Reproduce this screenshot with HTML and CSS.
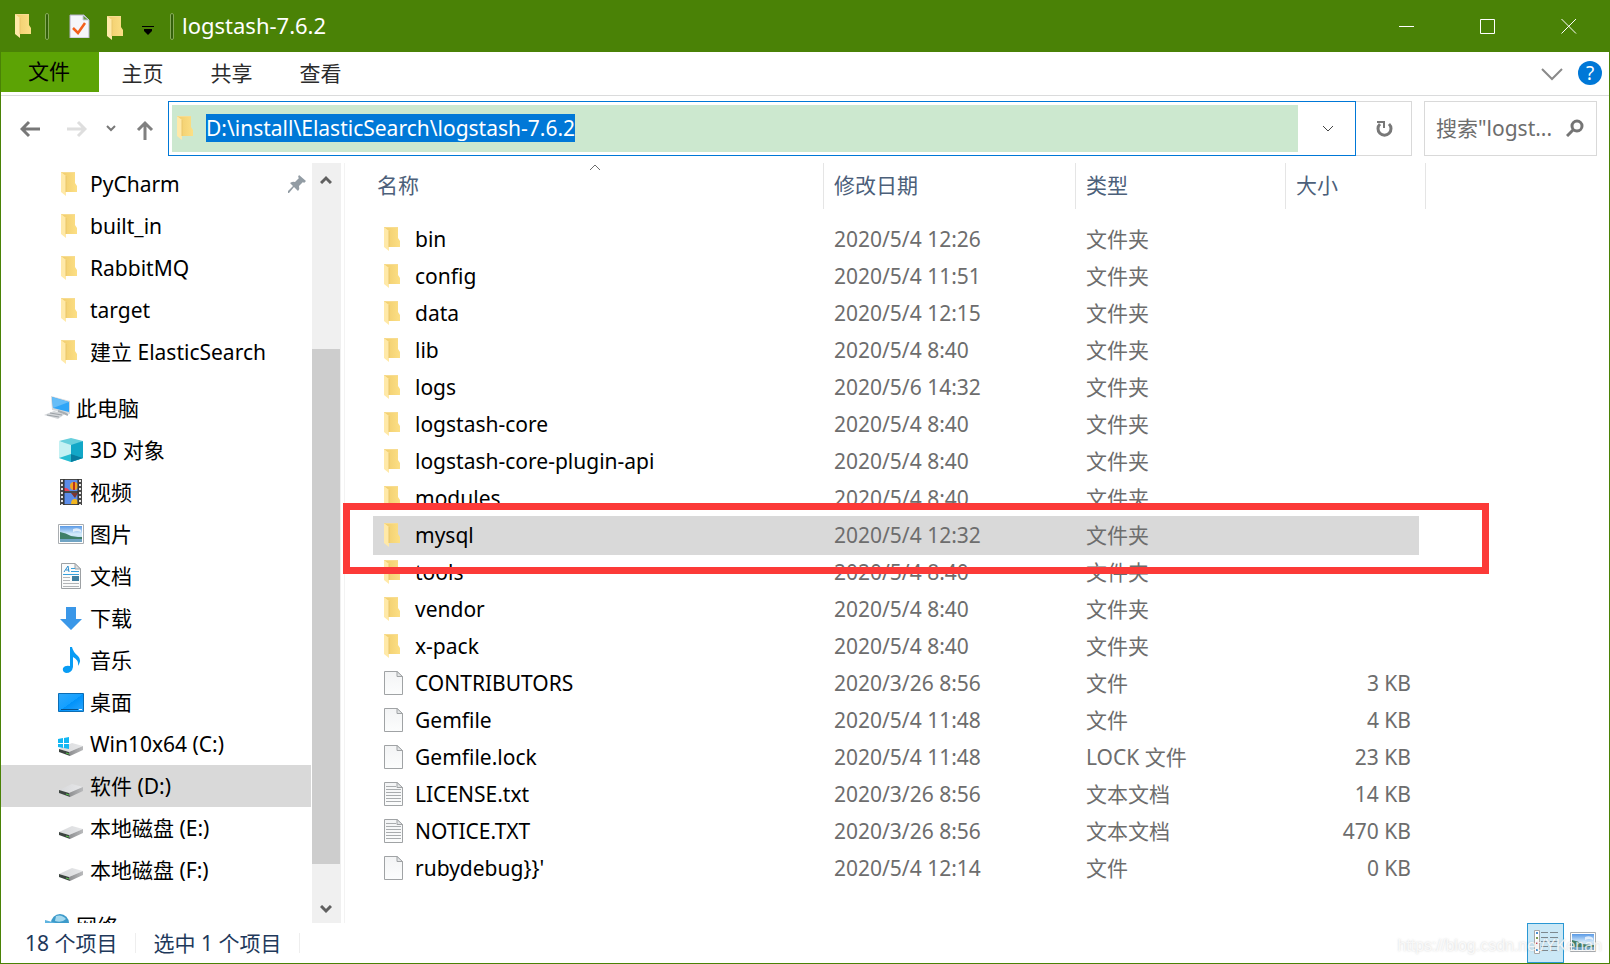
FILE: index.html
```html
<!DOCTYPE html>
<html lang="zh-CN">
<head>
<meta charset="utf-8">
<title>logstash-7.6.2</title>
<link rel="stylesheet" href="styles.css">
</head>
<body>
<svg class="defs" aria-hidden="true">
  <defs>
    <linearGradient id="g-folder" x1="0" x2="1"><stop offset="0" stop-color="#f0cc6c"/><stop offset="1" stop-color="#fcdf85"/></linearGradient>
    <linearGradient id="g-page" x1="0" x2="0" y1="0" y2="1"><stop offset="0" stop-color="#f3f4f5"/><stop offset="1" stop-color="#fcfdfd"/></linearGradient>
    <linearGradient id="g-sky" x1="0" x2="0" y1="0" y2="1"><stop offset="0" stop-color="#5a9ae6"/><stop offset=".5" stop-color="#d5ebfb"/><stop offset="1" stop-color="#a9cfee"/></linearGradient>
    <linearGradient id="g-blue" x1="0" x2="1" y1="0" y2="1"><stop offset="0" stop-color="#2fa8fb"/><stop offset=".5" stop-color="#14a0ff"/><stop offset=".51" stop-color="#0092fa"/><stop offset="1" stop-color="#2ba5fd"/></linearGradient>
    <linearGradient id="g-drive" x1="0" x2="1"><stop offset="0" stop-color="#d8d9db"/><stop offset="1" stop-color="#e6e7e9"/></linearGradient>
    <linearGradient id="g-side" x1="0" x2="1"><stop offset="0" stop-color="#8d8e90"/><stop offset="1" stop-color="#b9babc"/></linearGradient>
  </defs>
  <symbol id="folder" viewBox="0 0 24 24">
    <path d="M1 0H15V11L17 14V20H4Z" fill="url(#g-folder)"/>
    <path d="M1 0L6 4V24L1 20Z" fill="#ffe9a8"/>
    <path d="M1 0H15V1H3Z" fill="#f7dc91"/>
    <path d="M6 4V20" stroke="#e9c66a" stroke-width="1"/>
  </symbol>
  <symbol id="page" viewBox="0 0 24 24">
    <path d="M1.500 .5H14L19.500 5.500V23.500H1.500Z" fill="url(#g-page)" stroke="#a0a3a5"/>
    <path d="M14 .5V5.500H19.500Z" fill="#e3e5e6" stroke="#a0a3a5"/>
  </symbol>
  <symbol id="textpage" viewBox="0 0 24 24">
    <use href="#page"/>
    <path d="M3 4.500H13M3 7.500H18M3 10.500H18M3 13.500H18M3 16.500H18M3 19.500H18" stroke="#a9acae"/>
  </symbol>
  <symbol id="drive" viewBox="0 0 26 26">
    <path d="M1 17L14 11L25 14L11 20Z" fill="url(#g-drive)"/>
    <path d="M11 20L25 14V18L12 24Z" fill="url(#g-side)"/>
    <path d="M1 17L11 20L12 24L1 20Z" fill="#3c4440"/>
    <path d="M8 21L11 22" stroke="#54c04a"/>
  </symbol>
  <symbol id="photo" viewBox="0 0 26 26">
    <path d="M.5 3.500H25.500V22.500H.5Z" fill="#fff" stroke="#a9adb1"/>
    <path d="M2 5H24V21H2Z" fill="url(#g-sky)"/>
    <path d="M2 11Q8 12 13 15L20 16L24 16V18H2Z" fill="#3f7f68"/>
    <path d="M2 18H24V21H2Z" fill="#70a4c4"/>
    <path d="M15 8Q20 6 23 9V11Q19 9 15 11Z" fill="#fff" opacity=".7"/>
  </symbol>
</svg>

<div class="window">
  <header class="titlebar">
    <svg class="ico"><use href="#folder"/></svg>
    <span class="sep sep-first"></span>
    <button class="quick" aria-label="属性"><svg class="ico" viewBox="0 0 24 24"><path d="M2 1H16L21 6V24H2Z" fill="#f6f6fa" stroke="#b4b0c8"/><path d="M15 1V6H21Z" fill="#6d9a45" stroke="#c8cbe0"/><path d="M5 14L10 19L17 9" fill="none" stroke="#f4601c" stroke-width="2.500"/></svg></button>
    <button class="quick quick-folder" aria-label="新建文件夹"><svg class="ico"><use href="#folder"/></svg></button>
    <button class="quick quick-more" aria-label="自定义快速访问工具栏"><svg width="12" height="10" viewBox="0 0 12 10"><path d="M0 1H12V2H0ZM2 4H10V6L6 10L2 6Z"/></svg></button>
    <span class="sep"></span>
    <h1>logstash-7.6.2</h1>
    <div class="caption">
      <button aria-label="最小化"><svg width="16" height="16"><path d="M0 8.500H15"/></svg></button>
      <button aria-label="最大化"><svg width="16" height="16"><path d="M.5 1.500H14.500V15.500H.5Z"/></svg></button>
      <button aria-label="关闭"><svg width="16" height="16"><path d="M.5 1L15 15.500M15 1L.5 15.500"/></svg></button>
    </div>
  </header>

  <nav class="ribbon">
    <button class="tab tab-file">文件</button>
    <button class="tab">主页</button>
    <button class="tab">共享</button>
    <button class="tab">查看</button>
    <button class="expand" aria-label="展开功能区"><svg width="22" height="14"><path d="M1 2L11 12L21 2"/></svg></button>
    <button class="help" aria-label="帮助">?</button>
  </nav>

  <div class="navbar">
    <div class="arrows">
      <button aria-label="后退"><svg width="20" height="18" viewBox="0 0 20 18"><path d="M20 9H2M9 2L2 9L9 16" stroke="#787878" stroke-width="3"/></svg></button>
      <button class="fwd" aria-label="前进"><svg width="20" height="18" viewBox="0 0 20 18"><path d="M0 9H18M11 2L18 9L11 16" stroke="#dedede" stroke-width="3"/></svg></button>
      <button class="recent" aria-label="最近浏览的位置"><svg width="10" height="8" viewBox="0 0 10 8"><path d="M1 1L5 5L9 1" stroke="#787878" stroke-width="2"/></svg></button>
      <button class="up" aria-label="向上"><svg width="18" height="20" viewBox="0 0 18 20"><path d="M9 20V3M2 10L9 3L16 10" stroke="#808080" stroke-width="3"/></svg></button>
    </div>
    <div class="address">
      <div class="path">
        <svg class="ico"><use href="#folder"/></svg>
        <input class="path-input" aria-label="地址" value="D:\install\ElasticSearch\logstash-7.6.2" spellcheck="false">
      </div>
      <button class="drop" aria-label="以前的位置"><svg width="12" height="8"><path d="M1 1L6 6L11 1"/></svg></button>
    </div>
    <button class="refresh" aria-label="刷新"><svg width="18" height="18" viewBox="0 0 18 18"><path d="M13 4A6.500 6.500 0 1 1 4 4" fill="none" stroke="#787878" stroke-width="3"/><path d="M1 2H8V8" fill="none" stroke="#787878" stroke-width="2"/></svg></button>
    <div class="search">
      <input aria-label="搜索" placeholder="搜索&quot;logst...">
      <button aria-label="开始搜索"><svg width="18" height="18" viewBox="0 0 18 18"><circle cx="11" cy="7" r="5" fill="none" stroke="#757575" stroke-width="3"/><path d="M1 17L8 10" stroke="#757575" stroke-width="3"/></svg></button>
    </div>
  </div>

  <div class="body">
    <aside class="sidebar">
      <ul class="tree">
        <li><a href="#"><svg class="ico"><use href="#folder"/></svg>PyCharm<svg class="pin" width="18" height="18" viewBox="0 0 18 18"><path d="M11 0L18 6L16 8L15 7L11 11Q12 14 10 16L6 12L1 18H0V16L5 11L2 8Q5 6 7 7L11 3L10 2Z" fill="#929ca4"/></svg></a></li>
        <li><a href="#"><svg class="ico"><use href="#folder"/></svg>built_in</a></li>
        <li><a href="#"><svg class="ico"><use href="#folder"/></svg>RabbitMQ</a></li>
        <li><a href="#"><svg class="ico"><use href="#folder"/></svg>target</a></li>
        <li><a href="#"><svg class="ico"><use href="#folder"/></svg>建立 ElasticSearch</a></li>
      </ul>
      <ul class="tree">
        <li class="root"><a href="#"><svg class="big" viewBox="0 0 26 26"><path d="M7 1L26 6V19L8 15Z" fill="#d4d8dc"/><path d="M8 2L25 7V17L9 13Z" fill="#2fa5f7"/><path d="M8 2L25 7L9 13Z" fill="#66bdf7"/><path d="M0 20L10 16L21 19L14 24Z" fill="#d3d6d9"/><path d="M3 20L15 22M6 18L18 20" stroke="#9ba1a6"/><path d="M14 16L20 18L24 20" stroke="#a7adb2" stroke-width="2"/></svg>此电脑</a></li>
        <li><a href="#"><svg class="big" viewBox="0 0 26 26"><path d="M1 4L13 1L25 4L13 10Z" fill="#67cfdc"/><path d="M1 4L13 8V25L1 21Z" fill="#c4f1f3"/><path d="M13 8L25 4V21L13 25Z" fill="#12a7c7"/><path d="M13 17L25 21L13 25L1 21Z" fill="#28bdd2"/><path d="M13 17L25 21L13 25Z" fill="#087c9f"/></svg>3D 对象</a></li>
        <li><a href="#"><svg class="big" viewBox="0 0 26 26"><path d="M2 0H24V26H2Z" fill="#484848"/><path d="M6 1H20V12H6ZM6 14H20V25H6Z" fill="#5c8de8"/><path d="M4 1V26M22 1V26" stroke="#e4e4e4" stroke-width="2" stroke-dasharray="2 2"/><circle cx="16" cy="7" r="4" fill="#f1a421"/><path d="M15 3H17V11H15Z" fill="#b9321d"/><path d="M6 9Q9 8 12 12H6Z" fill="#e9435a"/><path d="M13 25Q13 20 17 20Q20 20 20 25Z" fill="#f1b621"/><path d="M13 14H20L17 19Z" fill="#7d3630"/><path d="M20 0V26M6 0V26" stroke="#292929"/></svg>视频</a></li>
        <li><a href="#"><svg class="big"><use href="#photo"/></svg>图片</a></li>
        <li><a href="#"><svg class="big" viewBox="0 0 26 26"><path d="M3.500 .5H17L22.500 6V25.500H3.500Z" fill="#fafbfb" stroke="#9da1a4"/><path d="M17 .5V6H22.500Z" fill="#dee1e3" stroke="#9da1a4"/><path d="M6 9L10 3L11 9M8 7H11" fill="none" stroke="#2c8dcc" stroke-width="1"/><path d="M13 5.500H17M13 8.500H21M5 11.500H21" stroke="#37a0dc"/><path d="M5 14.500H12M5 17.500H12M5 20.500H21M5 23.500H21" stroke="#b2b5b8"/><path d="M14 13H21V18H14Z" fill="#3e7e9f"/></svg>文档</a></li>
        <li><a href="#"><svg class="big" viewBox="0 0 26 26"><path d="M8 2H18V14H24L13 25L2 14H8Z" fill="#3a97e8"/></svg>下载</a></li>
        <li><a href="#"><svg class="big" viewBox="0 0 26 26"><path d="M12 0H14Q15 5 20 9Q24 13 20 19Q21 13 15 10V20Q14 26 8 26Q4 25 5 21Q7 18 12 19Z" fill="#089cf4"/></svg>音乐</a></li>
        <li><a href="#"><svg class="big" viewBox="0 0 26 26"><path d="M.5 4.500H25.500V22.500H.5Z" fill="url(#g-blue)" stroke="#0b6db5"/><path d="M3 20.500H20" stroke="#07528c"/><path d="M21 20.500H24" stroke="#e9f5ff"/></svg>桌面</a></li>
        <li><a href="#"><svg class="big" viewBox="0 0 26 26"><use href="#drive" y="1"/><path d="M0 8L5 7V12H0ZM6 7L11 6V12H6ZM0 13H5V17L0 16ZM6 13H11V18L6 17Z" fill="#12b7f3"/></svg>Win10x64 (C:)</a></li>
        <li class="current"><a href="#"><svg class="big"><use href="#drive"/></svg>软件 (D:)</a></li>
        <li><a href="#"><svg class="big"><use href="#drive"/></svg>本地磁盘 (E:)</a></li>
        <li><a href="#"><svg class="big"><use href="#drive"/></svg>本地磁盘 (F:)</a></li>
      </ul>
      <ul class="tree">
        <li class="root"><a href="#"><svg class="big" viewBox="0 0 26 26"><circle cx="16" cy="10" r="9" fill="#3c9aca"/><path d="M12 3Q18 1 22 6Q18 10 11 8Z" fill="#a4d8ee"/><path d="M1 7L12 10V20L1 16Z" fill="#5fb4e0"/></svg>网络</a></li>
      </ul>
    </aside>
    <div class="scrollbar">
      <button aria-label="向上滚动"><svg width="12" height="10"><path d="M1 9L6 4L11 9"/></svg></button>
      <div class="track"><div class="thumb"></div></div>
      <button aria-label="向下滚动"><svg width="12" height="10"><path d="M1 1L6 6L11 1"/></svg></button>
    </div>

    <main class="files">
      <table>
        <colgroup><col class="c-name"><col class="c-date"><col class="c-type"><col class="c-size"></colgroup>
        <thead>
          <tr>
            <th><div class="head head-name">名称<svg class="sort" width="12" height="8"><path d="M1 6L6 1L11 6"/></svg></div></th>
            <th><div class="head">修改日期</div></th>
            <th><div class="head">类型</div></th>
            <th><div class="head head-size">大小</div></th>
          </tr>
        </thead>
        <tbody>
          <tr><td><svg class="ico"><use href="#folder"/></svg>bin</td><td>2020/5/4 12:26</td><td>文件夹</td><td></td></tr>
          <tr><td><svg class="ico"><use href="#folder"/></svg>config</td><td>2020/5/4 11:51</td><td>文件夹</td><td></td></tr>
          <tr><td><svg class="ico"><use href="#folder"/></svg>data</td><td>2020/5/4 12:15</td><td>文件夹</td><td></td></tr>
          <tr><td><svg class="ico"><use href="#folder"/></svg>lib</td><td>2020/5/4 8:40</td><td>文件夹</td><td></td></tr>
          <tr><td><svg class="ico"><use href="#folder"/></svg>logs</td><td>2020/5/6 14:32</td><td>文件夹</td><td></td></tr>
          <tr><td><svg class="ico"><use href="#folder"/></svg>logstash-core</td><td>2020/5/4 8:40</td><td>文件夹</td><td></td></tr>
          <tr><td><svg class="ico"><use href="#folder"/></svg>logstash-core-plugin-api</td><td>2020/5/4 8:40</td><td>文件夹</td><td></td></tr>
          <tr><td><svg class="ico"><use href="#folder"/></svg>modules</td><td>2020/5/4 8:40</td><td>文件夹</td><td></td></tr>
          <tr class="selected"><td><svg class="ico"><use href="#folder"/></svg>mysql</td><td>2020/5/4 12:32</td><td>文件夹</td><td></td></tr>
          <tr><td><svg class="ico"><use href="#folder"/></svg>tools</td><td>2020/5/4 8:40</td><td>文件夹</td><td></td></tr>
          <tr><td><svg class="ico"><use href="#folder"/></svg>vendor</td><td>2020/5/4 8:40</td><td>文件夹</td><td></td></tr>
          <tr><td><svg class="ico"><use href="#folder"/></svg>x-pack</td><td>2020/5/4 8:40</td><td>文件夹</td><td></td></tr>
          <tr><td><svg class="ico"><use href="#page"/></svg>CONTRIBUTORS</td><td>2020/3/26 8:56</td><td>文件</td><td>3 KB</td></tr>
          <tr><td><svg class="ico"><use href="#page"/></svg>Gemfile</td><td>2020/5/4 11:48</td><td>文件</td><td>4 KB</td></tr>
          <tr><td><svg class="ico"><use href="#page"/></svg>Gemfile.lock</td><td>2020/5/4 11:48</td><td>LOCK 文件</td><td>23 KB</td></tr>
          <tr><td><svg class="ico"><use href="#textpage"/></svg>LICENSE.txt</td><td>2020/3/26 8:56</td><td>文本文档</td><td>14 KB</td></tr>
          <tr><td><svg class="ico"><use href="#textpage"/></svg>NOTICE.TXT</td><td>2020/3/26 8:56</td><td>文本文档</td><td>470 KB</td></tr>
          <tr><td><svg class="ico"><use href="#page"/></svg>rubydebug}}'</td><td>2020/5/4 12:14</td><td>文件</td><td>0 KB</td></tr>
        </tbody>
      </table>
      <div class="marker"></div>
    </main>
  </div>

  <footer class="status">
    <span class="count">18 个项目</span>
    <span class="count">选中 1 个项目</span>
    <div class="views">
      <button class="view view-on" aria-label="详细信息"><svg width="24" height="24" viewBox="0 0 24 24"><path d="M.5 .5H5.500V23.500H.5Z" fill="#fff" stroke="#a8a8a8"/><path d="M2 3H4" stroke="#4c8ed0" stroke-width="2"/><path d="M2 8H4" stroke="#7b9a54" stroke-width="2"/><path d="M2 13H4" stroke="#cf4b37" stroke-width="2"/><path d="M2 20H4" stroke="#4c8ed0" stroke-width="2"/><path d="M7 2.500H14M16 2.500H24M7 7.500H14M16 7.500H24M7 11.500H14M16 11.500H24M7 16.500H14M16 16.500H24M7 20.500H14M16 20.500H24" stroke="#7d888e"/></svg></button>
      <button class="view" aria-label="大图标"><svg class="big"><use href="#photo"/></svg></button>
    </div>
    <span class="watermark">https://blog.csdn.net/YKenan</span>
  </footer>
</div>
</body>
</html>
```
FILE: styles.css
```css
* { box-sizing: border-box; }
body {
  margin: 0;
  font-family: "Noto Sans", "Noto Sans CJK SC", sans-serif;
  font-size: 21px;
  line-height: 28px;
  color: #000;
}
button {
  display: flex;
  align-items: center;
  justify-content: center;
  padding: 0;
  border: 0;
  background: none;
  font: inherit;
  color: inherit;
}
input { border: 0; padding: 0; font: inherit; outline: 0; min-width: 0; }
svg { flex: none; display: block; }
.defs { position: absolute; width: 0; height: 0; }
.ico { width: 24px; height: 24px; }
.big { width: 26px; height: 26px; }

.window {
  display: flex;
  flex-direction: column;
  height: 100vh;
  background: #fff;
  border: 1px solid #4a8206;
  border-top: 0;
}

/* Title bar */
.titlebar {
  display: flex;
  align-items: center;
  flex: none;
  height: 52px;
  padding-left: 13px;
  background: #4a8206;
  color: #fff;
}
.titlebar h1 { margin: 0 0 2px 8px; font-size: 22px; font-weight: 400; }
.sep { width: 4px; height: 27px; border: 1px solid #86ab57; border-radius: 2px; background: #33600a; }
.sep-first { margin: 0 19px 0 7px; }
.quick { margin-right: 14px; }
.quick-folder { margin: 4px 12px 0 0; }
.quick-more { margin: 7px 16px 0 0; }
.quick-more svg { fill: #000; }
.caption { display: flex; margin-left: auto; height: 100%; }
.caption button { width: 81px; }
.caption svg { fill: none; stroke: #fff; }

/* Ribbon */
.ribbon {
  display: flex;
  flex: none;
  height: 44px;
  border-bottom: 1px solid #dadbdc;
  color: #2b2b2b;
}
.tab { width: 89px; height: 43px; padding: 0 2px 2px 0; }
.tab-file { width: 98px; height: 40px; background: #5ca305; color: #000; }
.expand { margin-left: auto; width: 22px; }
.expand svg { fill: none; stroke: #8a8a8a; stroke-width: 2; }
.help {
  align-self: center;
  width: 24px;
  height: 24px;
  margin: 0 7px 2px 15px;
  border-radius: 50%;
  background: #0078d7;
  color: #fff;
  font-size: 19px;
  line-height: 24px;
}

/* Navigation bar */
.navbar { display: flex; flex: none; height: 67px; padding: 5px 12px 7px 19px; }
.arrows { display: flex; align-items: center; width: 148px; }
.arrows svg { fill: none; }
.fwd { margin-left: 27px; }
.recent { margin-left: 19px; }
.up { margin: 2px 0 0 20px; }
.address { display: flex; flex: 1; border: 1px solid #0078d7; min-width: 0; }
.path { display: flex; align-items: center; flex: 1; margin: 3px 0 3px 3px; padding: 0 0 1px 4px; background: #cce8cf; }
.path-input { field-sizing: content; height: 28px; margin-left: 6px; background: #0078d7; color: #fff; }
.drop { width: 57px; padding-left: 2px; }
.drop svg { fill: none; stroke: #444; }
.refresh { width: 56px; padding-left: 2px; border: 1px solid #d9d9d9; border-left: 0; }
.search {
  display: flex;
  align-items: center;
  width: 173px;
  margin-left: 12px;
  padding: 0 12px 1px 11px;
  border: 1px solid #d9d9d9;
}
.search input { flex: 1; }
.search input::placeholder { color: #6d6d6d; opacity: 1; }

/* Body */
.body { display: flex; flex: 1; min-height: 0; }
.sidebar { width: 311px; overflow: hidden; padding-right: 1px; }
.tree { list-style: none; margin: 0 0 14px; padding: 0; }
.tree a {
  display: flex;
  align-items: center;
  gap: 6px;
  height: 42px;
  padding-left: 57px;
  color: #000;
  text-decoration: none;
}
.tree .ico { margin: 0 0 0 2px; }
.tree .root a { padding-left: 43px; }
.tree .current a { background: #d9d9d9; }
.tree .pin { margin: 0 5px 0 auto; }

.scrollbar { display: flex; flex-direction: column; flex: none; width: 29px; background: #f0f0f0; }
.scrollbar button { height: 29px; padding: 3px 1px 0 0; }
.scrollbar svg { fill: none; stroke: #606060; stroke-width: 3; }
.track { display: flex; flex: 1; padding: 157px 1px 30px 0; }
.thumb { flex: 1; background: #cdcdcd; }

.files {
  position: relative;
  flex: 1;
  min-width: 0;
  margin-left: 3px;
  padding-left: 28px;
  border-left: 1px solid #f3f3f3;
}
table { table-layout: fixed; width: 1046px; border-collapse: collapse; }
.c-name { width: 450px; }
.c-date { width: 252px; }
.c-type { width: 210px; }
.c-size { width: 134px; }
th { height: 58px; padding: 0; text-align: left; vertical-align: top; font-weight: 400; color: #4c607a; }
.head { height: 46px; padding: 8px 0 0 10px; border-left: 1px solid #e5e5e5; }
.head-name { display: flex; padding-left: 4px; border: 0; }
.head-size { margin-right: -7px; border-right: 1px solid #e5e5e5; }
.sort { margin: -7px 0 0 170px; fill: none; stroke: #6d6d6d; }
td { height: 37px; padding: 0 0 2px 11px; color: #6d6d6d; white-space: nowrap; }
td:first-child { display: flex; align-items: center; gap: 8px; padding-left: 10px; color: #000; }
td:last-child { padding: 0 8px 2px 0; text-align: right; }
.selected td { background: #d9d9d9; box-shadow: 0 -1px #d9d9d9, 0 1px #d9d9d9; }
.marker {
  position: absolute;
  top: 340px;
  left: -2px;
  width: 1146px;
  height: 71px;
  border: 7px solid #fc3a38;
  pointer-events: none;
}

/* Status bar */
.status { position: relative; display: flex; align-items: center; flex: none; height: 40px; padding-left: 24px; color: #1e395b; }
.count { margin-right: 17px; padding-right: 18px; line-height: 20px; border-right: 1px solid #eee; }
.views { display: flex; align-self: stretch; margin-left: auto; padding-right: 8px; }
.view { width: 37px; padding-bottom: 2px; }
.view-on { border: 1px solid #2a98d4; background: #cbe8f6; }
.watermark {
  position: absolute;
  right: 7px;
  bottom: 5px;
  font: 16px/24px "Liberation Sans", sans-serif;
  color: rgba(255, 255, 255, .8);
  text-shadow: 0 0 2px rgba(120, 120, 120, .35);
}
```
